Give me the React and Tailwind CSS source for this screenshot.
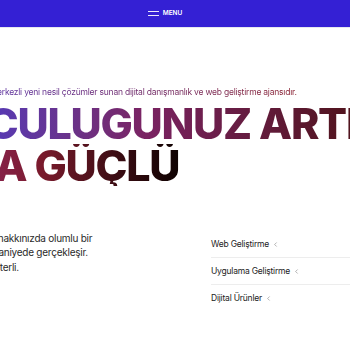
import React from 'react';
import { ChevronLeft } from 'lucide-react';

const services = ['Web Geliştirme', 'Uygulama Geliştirme', 'Dijital Ürünler'];

const App = () => {
    return (
        <div className="min-h-screen bg-white overflow-hidden" style={{ fontFamily: "Inter, 'Noto Sans', sans-serif" }}>
            {/* Top bar */}
            <header className="h-[28px] bg-[#3420d4] border-b border-[#e5e7f0] flex items-center justify-center">
                <button className="mr-[20px] flex items-center gap-[4px] text-white text-[6.5px] font-semibold">
                    <span className="flex flex-col gap-[3px]">
                        <span className="block w-[11px] h-px bg-white/90" />
                        <span className="block w-[11px] h-px bg-white/90" />
                    </span>
                    MENU
                </button>
            </header>

            <main className="-ml-[96px] w-[760px] pt-[58px]">
                {/* Hero */}
                <p className="text-[8.5px] tracking-tight text-transparent bg-clip-text bg-gradient-to-r from-[#4b2bc0] via-[#6a2a78] to-[#8a2030] w-fit">
                    Ajansımız, bir kullanıcı merkezli yeni nesil çözümler sunan dijital danışmanlık ve web geliştirme ajansıdır.
                </p>
                <h1 className="mt-[3px] text-[43px] leading-[42px] font-extrabold tracking-[-0.03em]">
                    <span className="block w-fit text-transparent bg-clip-text bg-gradient-to-r from-[#3a36e6] via-[#7a2262] to-[#4a1010]">
                        YOLCULUGUNUZ ARTIK
                    </span>
                    <span className="block w-fit text-transparent bg-clip-text bg-gradient-to-r from-[#a02c80] via-[#7a1a2c] to-[#0f0303]">
                        DAHA GÜÇLÜ
                    </span>
                </h1>

                {/* Intro + services */}
                <section className="mt-[45px] grid grid-cols-[307px_1fr]">
                    <p className="text-[10px] leading-[14.5px] text-[#2a2a2a] tracking-tight whitespace-nowrap">
                        Müşterilerinizin sizin hakkınızda olumlu bir<br />
                        izlenim edinmesi ilk saniyede gerçekleşir.<br />
                        Onun için 3 saniye yeterli.
                    </p>
                    <ul className="mt-[0.5px] text-[8.5px] text-[#222] tracking-tight">
                        {services.map((s, i) => (
                            <li key={s} className={`flex items-center gap-[3px] h-[27px] ${i < services.length - 1 ? 'border-b border-[#ededed]' : ''}`}>
                                {s}
                                <ChevronLeft size={7} strokeWidth={1.5} className="text-[#555]" />
                            </li>
                        ))}
                    </ul>
                </section>
            </main>
        </div>
    );
};

export default App;
